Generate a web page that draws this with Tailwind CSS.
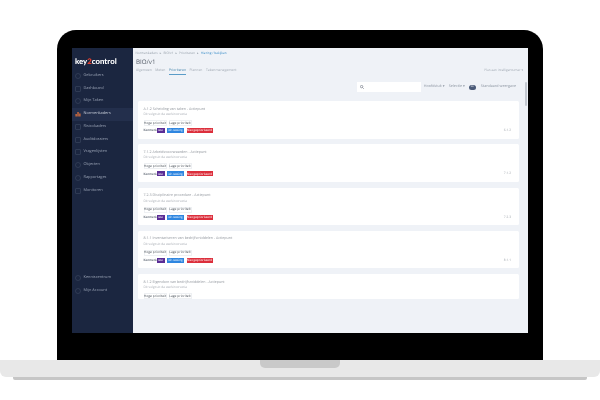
<!DOCTYPE html>
<html lang="en">
  <head>
    <meta charset="UTF-8" />
    <title>key2control laptop</title>
    <script src="https://cdn.jsdelivr.net/npm/@tailwindcss/browser@4"></script>
  </head>
  <body>
    <div class="w-[600px] h-[400px] bg-white overflow-hidden pt-[30px] whitespace-nowrap [text-rendering:geometricPrecision] font-['Open_Sans',sans-serif]">
      <!-- Lid -->
      <div class="w-[486px] h-[330px] ml-[57px] bg-black rounded-t-[19px] pt-[18px] px-[15px]">
        <div class="flex h-[285px] bg-[#eff2f7] blur-[0.3px]">
          <!-- Sidebar -->
          <div class="w-[61px] shrink-0 bg-[#1b2640] flex flex-col">
            <div class="h-[16px] mt-[5.5px] pl-[3px] flex items-center text-[7.8px] font-black text-white font-['Lato',sans-serif]">
              key<span class="text-[#e8412e]">2</span>control
            </div>
            <div id="nav-top" class="flex flex-col"></div>
            <div id="nav-bottom" class="mt-[74.5px] flex flex-col"></div>
          </div>
          <!-- Main -->
          <div class="flex-1 min-w-0 flex flex-col">
            <div class="h-[9px] pl-[2.5px] pt-[2px] flex items-center gap-[2px] text-[3.2px] text-[#9aa3ad]">
              <span>Normenkaders</span><span>▸</span><span>BIO/v1</span><span>▸</span><span>Prioriteren</span><span>▸</span><span class="text-[#3d8fc9]">Hiering / bekijken</span>
            </div>
            <div class="h-[9px] pl-[3px] flex items-center text-[6.2px] text-[#555d68]">BIO/v1</div>
            <div class="flex items-start pl-[3px] pr-[5px] pt-[1px] h-[14px] gap-[3.5px] text-[3.4px] text-[#a3abb5]">
              <span class="leading-[6px]">Algemeen</span>
              <span class="leading-[6px]">Meten</span>
              <span class="leading-[6px] text-[#3c7fa8] border-b border-[#5a9cc8] pb-[1px]">Prioriteren</span>
              <span class="leading-[6px]">Plannen</span>
              <span class="leading-[6px]">Takenmanagement</span>
              <span class="ml-auto leading-[6px] text-[3.2px]">Plan een intelligentumer ▾</span>
            </div>
            <!-- Toolbar -->
            <div class="h-[11px] mt-[1.5px] flex items-center justify-end gap-[3px] pr-[12px] text-[3.7px] text-[#8c95a1]">
              <div class="w-[64px] h-[10px] bg-white flex items-center pl-[3px]">
                <svg width="4" height="4" viewBox="0 0 10 10" fill="none" stroke="#6b7280" stroke-width="1.6"><circle cx="4" cy="4" r="3"/><path d="M6.5 6.5 9.5 9.5"/></svg>
              </div>
              <span class="w-[22px]">Hoofdstuk ▾</span>
              <span class="w-[17px]">Selectie ▾</span>
              <span class="w-[7px] h-[5px] rounded-full bg-[#4a5a78] text-white text-[2.6px] flex items-center justify-center">on</span>
              <span class="ml-[2px]">Standaard weergave</span>
            </div>
            <div class="flex flex-1 min-h-0 relative">
              <!-- Cards -->
              <div id="cards" class="ml-[5px] mt-[8.5px] w-[381px] h-[198.5px] overflow-hidden flex flex-col gap-[5.8px]"></div>
              <div class="absolute right-[1px] top-[-11px] w-[2px] h-[24px] rounded-full bg-[#c3c8d0]"></div>
            </div>
          </div>
        </div>
      </div>
      <!-- Base -->
      <div class="relative h-[17px] bg-[#e8e8e8] rounded-b-[6px] flex justify-center">
        <div class="w-[80px] h-[8px] bg-[#c9c9c9] rounded-b-[5px]"></div>
      </div>
      <div class="w-[574px] h-[3px] ml-[13px] bg-[#c6c6c6] rounded-b-[2px]"></div>
    </div>
    <script>
      const icon = (d) =>
        `<svg width="6" height="6" viewBox="0 0 12 12" fill="none" stroke="#445069" stroke-width="1" class="shrink-0">${d}</svg>`;
      const circle = '<circle cx="6" cy="6" r="5"/>';
      const box = '<rect x="1" y="1" width="10" height="10" rx="1"/>';
      const bars = '<path d="M1 11V6h2.5v5zM4.8 11V2h2.5v9zM8.5 11V5H11v6z" fill="#e8743b" stroke="none"/>';

      const navRow = ([label, shape, active]) => `
        <div class="h-[12.75px] pl-[3px] flex items-center gap-[2.5px] text-[3.9px] ${active ? "bg-[#232f4c] text-[#c6ccd8]" : "text-[#98a1b3]"}">
          ${icon(shape)}<span>${label}</span>
        </div>`;

      document.getElementById("nav-top").innerHTML = [
        ["Gebruikers", circle],
        ["Dashboard", box],
        ["Mijn Taken", circle],
        ["Normenkaders", bars, true],
        ["Risicokaders", box],
        ["Auditdossiers", box],
        ["Vragenlijsten", box],
        ["Objecten", circle],
        ["Rapportages", circle],
        ["Monitoren", box],
      ].map(navRow).join("");

      document.getElementById("nav-bottom").innerHTML = [
        ["Kenniscentrum", circle],
        ["Mijn Account", circle],
      ].map(navRow).join("");

      const createCard = ([title, code]) => `
        <div class="shrink-0 ${code ? "h-[37.5px]" : "h-[25px]"} bg-white rounded-[1.5px] pl-[5.5px] pr-[8px] pt-[5.5px] flex flex-col">
          <div class="h-[5px] leading-[5px] text-[3.6px] text-[#8f949b]">${title} - Actiepunt</div>
          <div class="h-[5px] mt-[0.5px] leading-[5px] text-[3.2px] text-[#a9aeb5]">Dit volgt uit de werkinstructie</div>
          <div class="flex gap-[2px] mt-[3px] text-[3.3px] text-[#4f565e]">
            <span class="h-[6px] w-[23px] flex items-center justify-center border-[0.5px] border-[#eef0f3]">Hoge prioriteit</span>
            <span class="h-[6px] w-[23px] flex items-center justify-center border-[0.5px] border-[#eef0f3]">Lage prioriteit</span>
          </div>
          ${code ? `<div class="flex items-center gap-[2.5px] mt-[2px] text-[3px]">
            <span class="text-[#4b5563] font-semibold w-[10.5px]">Kenmerk:</span>
            <span class="h-[5px] w-[8px] bg-[#5b2d96] text-white flex items-center justify-center">test</span>
            <span class="h-[5px] w-[17px] bg-[#2f86e0] text-white flex items-center justify-center">ish testing</span>
            <span class="h-[5px] w-[26px] bg-[#dc2f3c] text-white flex items-center justify-center">Niet geprioriteerd</span>
            <span class="ml-auto text-[#a0a6ad] text-[3.2px]">${code}</span>
          </div>` : ""}
        </div>`;

      document.getElementById("cards").innerHTML = [
        ["A.1.2 Scheiding van taken", "6.1.2"],
        ["7.1.2 Arbeidsvoorwaarden", "7.1.2"],
        ["7.2.3 Disciplinaire procedure", "7.2.3"],
        ["8.1.1 Inventariseren van bedrijfsmiddelen", "8.1.1"],
        ["8.1.2 Eigendom van bedrijfsmiddelen"],
      ].map(createCard).join("");
    </script>
  </body>
</html>
